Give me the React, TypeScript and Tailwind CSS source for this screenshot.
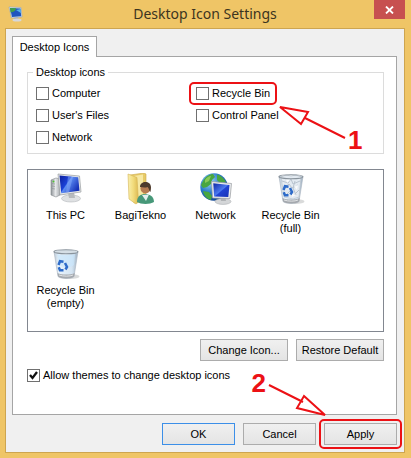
import type { ReactNode } from "react";

function ComputerIcon() {
  return (
    <svg width="32" height="32" viewBox="0 0 32 32" aria-hidden="true">
      <defs>
        <linearGradient id="pc-screen" x1="0" y1="0" x2="1" y2="0.6">
          <stop offset="0" stopColor="#0d1f9a" />
          <stop offset="0.45" stopColor="#1b41d8" />
          <stop offset="0.5" stopColor="#5d8df4" />
          <stop offset="1" stopColor="#1733b8" />
        </linearGradient>
        <linearGradient id="pc-tower" x1="0" y1="0" x2="1" y2="0">
          <stop offset="0" stopColor="#8f9499" />
          <stop offset="0.5" stopColor="#e6e8ea" />
          <stop offset="1" stopColor="#a9adb2" />
        </linearGradient>
      </defs>
      <path d="M1 7 6 5l4 1v16l-4 2-5-2z" fill="url(#pc-tower)" stroke="#85898d" strokeWidth=".6" />
      <path d="M2 10.500l3 .5M2 13l3 .5M2 15.500l3 .5" stroke="#8a8f94" strokeWidth=".6" />
      <circle cx="3.500" cy="8.500" r="1" fill="#4fc332" />
      <ellipse cx="21" cy="25.500" rx="9.500" ry="3.500" fill="#dfe1e3" stroke="#b4b7ba" strokeWidth=".6" />
      <path d="m18 20 6-1 1 6h-6z" fill="#b7babd" />
      <path d="M8 1 29.500 3 31 19 10 22z" fill="#e4e6e8" stroke="#999da1" strokeWidth=".7" />
      <path d="m9.500 2.500 18.700 1.700 1.300 13.600-18.300 2.500z" fill="url(#pc-screen)" />
      <path d="m18 3.500 5 .5-4 15-3 .5z" fill="#86aaf8" opacity=".5" />
    </svg>
  );
}

function UserFolderIcon() {
  return (
    <svg width="32" height="32" viewBox="0 0 32 32" aria-hidden="true">
      <defs>
        <linearGradient id="folder-front" x1="0" y1="0" x2="1" y2="0">
          <stop offset="0" stopColor="#f9efad" />
          <stop offset="0.5" stopColor="#f2dc7c" />
          <stop offset="1" stopColor="#dcb952" />
        </linearGradient>
      </defs>
      <path d="m5 2 14-2 2 1v26L9 30z" fill="#e7cb68" stroke="#cda94a" strokeWidth=".6" />
      <path d="m9 3 9-1.500v25L9 29z" fill="#f7e9a4" />
      <path d="m3 1 9 3.500L13.500 29l-2.500 2-7-5z" fill="url(#folder-front)" stroke="#d5b452" strokeWidth=".6" />
      <path d="M12 29c0-6 4-8 8-8s9 2 9 8c-4 2.500-13 2.500-17 0" fill="#479879" />
      <path d="m17 22 4 6 3-6.500z" fill="#e4eff0" />
      <circle cx="20.500" cy="15.500" r="5" fill="#b57b52" />
      <path d="M15 14c0-6.500 11-7 11 .5l-.5 4.500c-1.500-1-1.500-4-3-5-2 .8-4.500.5-7.500 0" fill="#4d3a2c" />
    </svg>
  );
}

function NetworkIcon() {
  return (
    <svg width="32" height="32" viewBox="0 0 32 32" aria-hidden="true">
      <defs>
        <radialGradient id="globe" cx=".35" cy=".3" r=".8">
          <stop offset="0" stopColor="#a0d8fa" />
          <stop offset="0.5" stopColor="#297bc9" />
          <stop offset="1" stopColor="#103c86" />
        </radialGradient>
        <linearGradient id="net-screen" x1="0" y1="0" x2="1" y2="1">
          <stop offset="0" stopColor="#1027a6" />
          <stop offset="0.5" stopColor="#4b79ef" />
          <stop offset="0.55" stopColor="#2143d2" />
          <stop offset="1" stopColor="#1832b5" />
        </linearGradient>
      </defs>
      <circle cx="14" cy="14" r="13.700" fill="url(#globe)" />
      <path d="M3 8c3-5 7-7 10-7l2 3-3 3-1 4-4 3-4 1-2-3zM3 18l6 1 3 4-1 4C7 26 4 23 3 18M17 1.500c4 1 7 4 9 7.500l-6 1-3-3z" fill="#48a641" />
      <path d="M5 7c2-3 4-4 6-4l-2 5-4 2z" fill="#9bd55f" opacity=".8" />
      <ellipse cx="23" cy="28.500" rx="8" ry="2.900" fill="#d4d6d8" stroke="#abaeb1" strokeWidth=".6" />
      <path d="m20 23 5-1 1 6h-5z" fill="#b0b3b6" />
      <path d="m11.500 8.500 20 2-1.500 15-17.500-.5z" fill="#eceeef" stroke="#969a9e" strokeWidth=".7" />
      <path d="m13.300 10.300 16.200 1.600-1.200 12-14.200-.5z" fill="url(#net-screen)" />
    </svg>
  );
}

function BinIcon({ full = false }: { full?: boolean }) {
  return (
    <svg width="32" height="32" viewBox="0 0 32 32" aria-hidden="true">
      <defs>
        <linearGradient id="bin-glass" x1="0" y1="0" x2="1" y2="0">
          <stop offset="0" stopColor="#b9c8d6" />
          <stop offset="0.2" stopColor="#e9f3fb" />
          <stop offset="0.75" stopColor="#d4e4f2" />
          <stop offset="1" stopColor="#9eafbf" />
        </linearGradient>
      </defs>
      <ellipse cx="20" cy="28.500" rx="9.500" ry="2.500" fill="#c9cacb" opacity=".7" />
      <path d="m4 3.500 4 25c2 2.500 14 2.500 16 0l4-25z" fill="url(#bin-glass)" stroke="#a7b2bd" strokeWidth=".6" />
      <path d="m7.500 25 .6 3.500c2 2.500 14 2.500 16 0l.6-3.500c-4 2-13 2-17.200 0" fill="#a5a9ae" />
      <path d="M9 27c4 1.500 11 1.500 14 0" fill="none" stroke="#e4e6e8" />
      {full ? (
        <>
          <path d="m6 4 5-2 5 1 5-1 5 2-2 20-6 2-9-2z" fill="#e3eaf1" stroke="#b4bdc6" strokeWidth=".6" />
          <path d="m7 8 6 2 3-4 2 5 7-3M9 15l5-4 3 4 6-3M11 22l4-4 4 4 5-5M20 8l-2 7 3 7" fill="none" stroke="#b9c4cf" strokeWidth="1" />
          <path d="m11 6 4 1-3 3zM19 13l4-1-1 5zM17 20l4 2-4 2z" fill="#fff" opacity=".8" />
        </>
      ) : (
        <path d="M7 6c4 1.500 14 1.500 18 0l-1 11c-4 3-11 3-15 0z" fill="#c9e5fb" opacity=".7" />
      )}
      <ellipse cx="16" cy="3.700" rx="12" ry="2" fill={full ? "none" : "#d5dee5"} stroke="#89939c" strokeWidth="1.100" />
      <g fill="none" stroke="#2d6bc9" strokeWidth="2.500">
        <path d="M8.500 17 10 13.200l3.500.5" />
        <path d="m15 15 2 4-1.500 2.500" />
        <path d="M13.500 22.300H10l-1.300-3" />
      </g>
    </svg>
  );
}

function TitleIcon() {
  return (
    <svg width="16" height="16" viewBox="0 0 16 16" aria-hidden="true">
      <path d="m1 1 12 .5L14 11 3.500 12z" fill="#dce6ef" stroke="#8fa5bb" strokeWidth=".6" />
      <path d="m2 2 10.500.4.700 7.800-9.200.8z" fill="#2055bf" />
      <path d="m2 2 6 .2C8 5 5 6 2.500 6.500z" fill="#42a04b" />
      <path d="m8 4 4.600-1 .4 4z" fill="#55b2ed" />
      <path d="m6 12 4-.5.500 2.500h-4z" fill="#a8adb5" />
      <ellipse cx="9" cy="14" rx="4.500" ry="1.500" fill="#d5d7dc" />
    </svg>
  );
}

function Check({ label, checked = false, marked = false }: { label: string; checked?: boolean; marked?: boolean }) {
  return (
    <label className="relative flex w-fit items-center gap-[3px]">
      <span className="grid size-[13px] shrink-0">
        <input
          type="checkbox"
          defaultChecked={checked}
          className="peer col-start-1 row-start-1 size-[13px] appearance-none border border-[#707070] bg-white"
        />
        <svg
          className="pointer-events-none invisible col-start-1 row-start-1 peer-checked:visible"
          width="13"
          height="13"
          viewBox="0 0 13 13"
          aria-hidden="true"
        >
          <path d="m3 6 2.500 3 4.500-6" fill="none" stroke="#111" strokeWidth="2.300" />
        </svg>
      </span>
      <span>{label}</span>
      {marked && (
        <span className="pointer-events-none absolute -top-[5px] -right-[7px] -bottom-[5px] -left-[7px] rounded-[5px] border-2 border-[#ec1115]" />
      )}
    </label>
  );
}

const face = "h-[22px] border bg-linear-to-b from-[#f0f0f0] to-[#e4e4e4] text-center";

function PushButton({ children, primary = false }: { children: ReactNode; primary?: boolean }) {
  return (
    <button type="button" className={`${face} w-[73px] ${primary ? "border-[#3c8fe8]" : "border-[#acacac]"}`}>
      {children}
    </button>
  );
}

const items = [
  { label: "This PC", icon: <ComputerIcon /> },
  { label: "BagiTekno", icon: <UserFolderIcon /> },
  { label: "Network", icon: <NetworkIcon /> },
  { label: "Recycle Bin (full)", icon: <BinIcon full /> },
  { label: "Recycle Bin (empty)", icon: <BinIcon /> },
];

export default function App() {
  return (
    <div className="flex min-h-screen flex-col bg-[#efc566] pr-[6px] pb-[5px] pl-[5px] font-['Liberation_Sans',Arial,sans-serif] text-[11px] leading-[13px] text-black">
      <header className="grid h-7 grid-cols-[31px_1fr_31px] items-center">
        <span className="pl-[3px]">
          <TitleIcon />
        </span>
        <h1 className="text-center font-['Noto_Sans',sans-serif] text-[14px] leading-5 text-[#3c3420]">
          Desktop Icon Settings
        </h1>
        <button type="button" aria-label="Close" className="grid h-[19px] w-[31px] place-items-center self-start bg-[#c75050]">
          <svg width="9" height="8" viewBox="0 0 9 8" aria-hidden="true">
            <path d="m1 .5 7 7m0-7-7 7" stroke="#fff" strokeWidth="1.800" />
          </svg>
        </button>
      </header>

      <main className="flex grow flex-col border border-[#cda550] bg-[#f0f0f0] pt-[7px] pr-[7px] pb-[7px] pl-[6px]">
        <div role="tablist" className="flex">
          <button
            type="button"
            role="tab"
            aria-selected="true"
            className="relative -mb-px h-[21px] w-[85px] border border-b-0 border-[#a5a5a5] bg-white"
          >
            Desktop Icons
          </button>
        </div>

        <section className="border border-[#a5a5a5] bg-white pt-[9px] pr-3 pb-8 pl-[14px]">
          <fieldset className="relative border border-[#dcdcdc] px-[5px] pb-[9px]">
            <legend className="px-[3px]">Desktop icons</legend>
            <div className="grid grid-cols-[160px_1fr] gap-y-[9px] pt-2 pl-[3px]">
              <Check label="Computer" />
              <Check label="Recycle Bin" marked />
              <Check label="User's Files" />
              <Check label="Control Panel" />
              <Check label="Network" />
            </div>
            <svg className="pointer-events-none absolute top-[27px] left-[250px]" width="70" height="35" viewBox="0 0 70 35" aria-hidden="true">
              <path d="m2 1 28 5-7 12zM27 12l40 20" fill="none" stroke="#ec1115" strokeWidth="2" />
            </svg>
            <span className="pointer-events-none absolute top-[48px] left-[320px] text-[26px] leading-[26px] font-bold text-[#ec1115]">
              1
            </span>
          </fieldset>

          <ul className="mt-[15px] grid h-[163px] auto-rows-[75px] grid-cols-[repeat(auto-fill,75px)] border border-[#828790] pt-[3px]">
            {items.map((item) => (
              <li key={item.label} className="flex flex-col items-center gap-1 text-center">
                {item.icon}
                <span className="w-[62px]">{item.label}</span>
              </li>
            ))}
          </ul>

          <div className="mt-[7px] flex justify-end gap-2">
            <button type="button" className={`${face} w-[88px] border-[#acacac]`}>
              Change Icon...
            </button>
            <button type="button" className={`${face} w-[88px] border-[#acacac]`}>
              Restore Default
            </button>
          </div>

          <div className="mt-2">
            <Check label="Allow themes to change desktop icons" checked />
          </div>
        </section>

        <footer className="relative mt-2 flex justify-end gap-2">
          <PushButton primary>OK</PushButton>
          <PushButton>Cancel</PushButton>
          <div className="relative">
            <PushButton>Apply</PushButton>
            <span className="pointer-events-none absolute -inset-x-[5px] -inset-y-1 rounded-[5px] border-2 border-[#ec1115]" />
          </div>
          <span className="pointer-events-none absolute right-[131px] bottom-[49px] text-[26px] leading-[26px] font-bold text-[#ec1115]">
            2
          </span>
          <svg className="pointer-events-none absolute right-[69px] bottom-[28px]" width="60" height="34" viewBox="0 0 60 34" aria-hidden="true">
            <path d="m1 2 34 17M36 13l21 19-28-7z" fill="none" stroke="#ec1115" strokeWidth="2" />
          </svg>
        </footer>
      </main>
    </div>
  );
}
